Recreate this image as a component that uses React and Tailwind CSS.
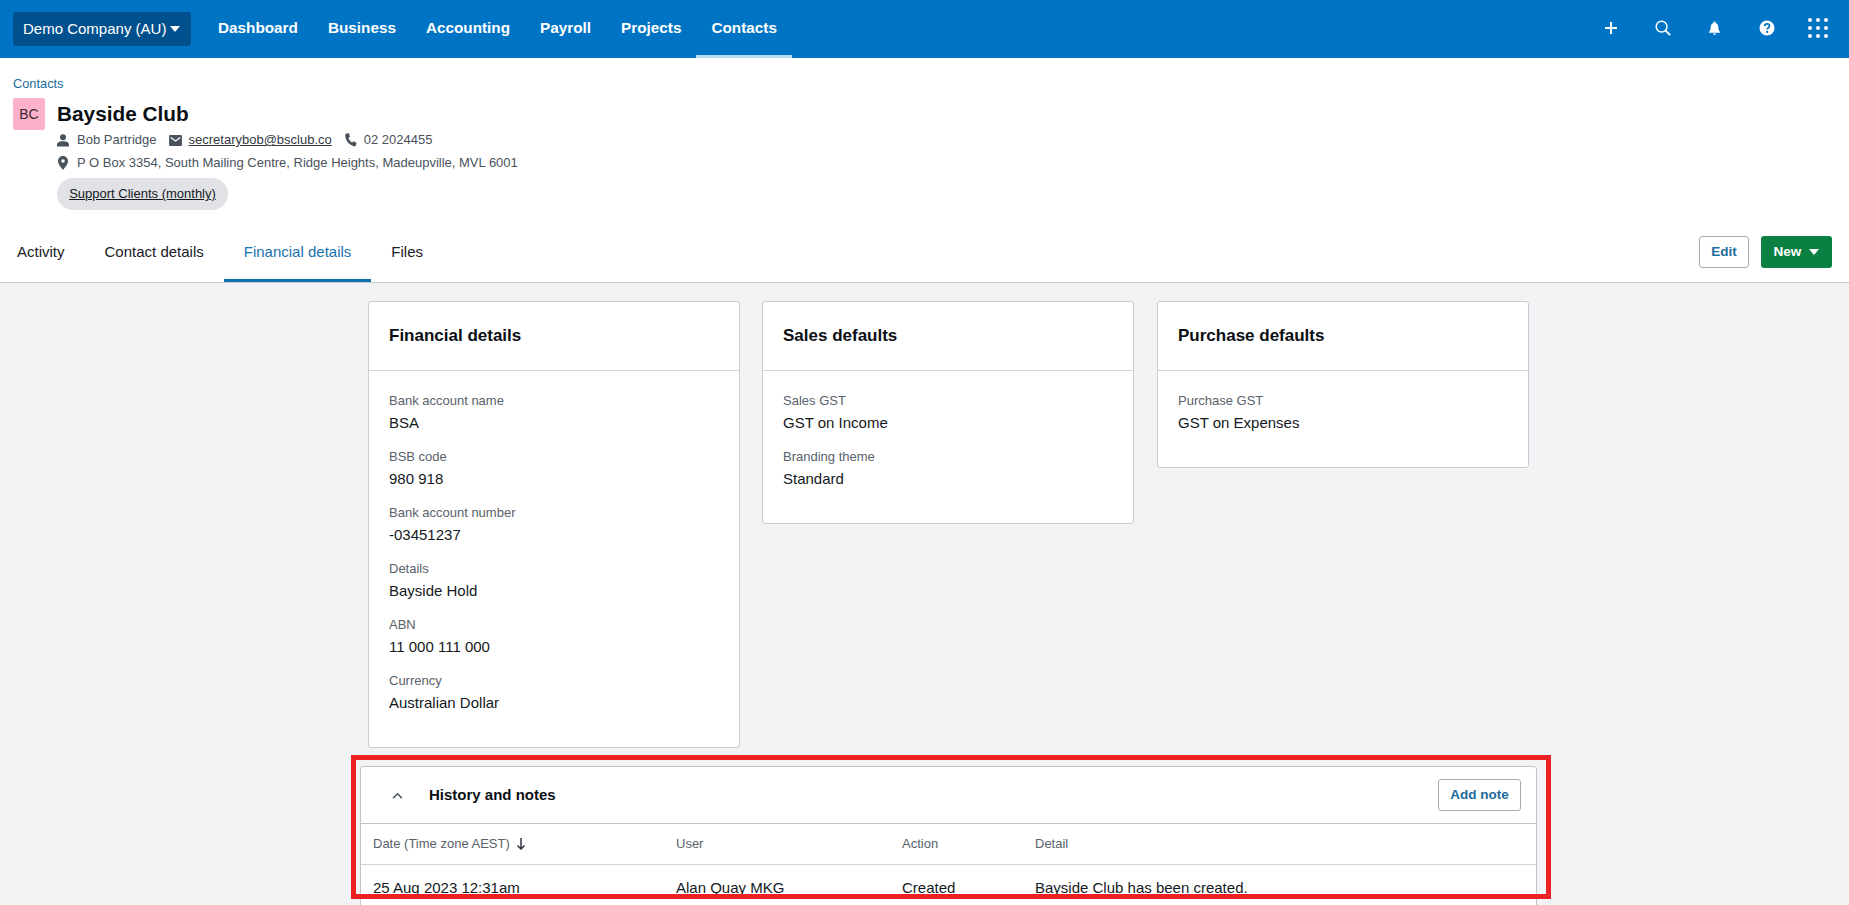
import React from "react";

function Field({ label, value }) {
  return (
    <div className="mb-[14px]">
      <div className="text-[13px] leading-[19px] text-[#59616b]">{label}</div>
      <div className="mt-[3px] text-[15px] leading-[20px] text-[#14191e]">{value}</div>
    </div>
  );
}

function Card({ title, fields, className }) {
  return (
    <div className={"w-[372px] rounded-[3px] border border-[#c9ccd0] bg-white " + className}>
      <div className="flex h-[69px] items-center border-b border-[#d0d3d7] pl-5 text-[17px] font-bold text-[#0b0f14]">{title}</div>
      <div className="px-5 pt-[20px] pb-[10px]">
        {fields.map((f) => (
          <Field key={f[0]} label={f[0]} value={f[1]} />
        ))}
      </div>
    </div>
  );
}

function Caret({ className }) {
  return (
    <svg viewBox="0 0 10 6" className={className} fill="currentColor">
      <path d="M0 0h10L5 6z" />
    </svg>
  );
}

function NavItem({ children, active }) {
  return (
    <div className="relative flex h-full items-center px-[15px] pb-[1px] text-[15.3px] font-bold text-white">
      {children}
      {active && <div className="absolute right-0 bottom-0 left-0 h-[3px] bg-[#b5dcf3]" />}
    </div>
  );
}

export default function App() {
  return (
    <div className="relative h-[905px] overflow-hidden bg-[#f2f3f5] font-['Liberation_Sans',Arial,sans-serif]">
      {/* Top nav */}
      <header className="flex h-[58px] items-center bg-[#0074c4] pl-[13px] pr-[21px]">
        <div className="flex h-[34px] w-[178px] items-center rounded-[3px] bg-[#00508d] pl-[10px] text-[15px] text-white">
          Demo Company (AU)
          <Caret className="ml-[4px] h-[6px] w-[10px]" />
        </div>
        <nav className="ml-[12px] flex h-full">
          <NavItem>Dashboard</NavItem>
          <NavItem>Business</NavItem>
          <NavItem>Accounting</NavItem>
          <NavItem>Payroll</NavItem>
          <NavItem>Projects</NavItem>
          <NavItem active>Contacts</NavItem>
        </nav>
        <div className="mb-[2px] ml-auto flex items-center text-white">
          <svg viewBox="0 0 12 12" className="h-[12px] w-[12px]" fill="none" stroke="currentColor" strokeWidth="2">
            <path d="M6 0v12M0 6h12" />
          </svg>
          <svg viewBox="0 0 16 16" className="ml-[38px] h-[16px] w-[16px]" fill="none" stroke="currentColor" strokeWidth="1.5">
            <circle cx="6.6" cy="6.6" r="5.4" />
            <path d="M10.6 10.6 15.2 15.2" strokeWidth="1.8" />
          </svg>
          <svg viewBox="0 0 14 16" className="ml-[37px] h-[15px] w-[13px]" fill="currentColor">
            <path d="M7 0.5c.7 0 1.1.5 1.1 1.1v.5c2 .5 3 2.2 3 4.4 0 2.600.6 4 1.900 5.300v.8H1v-.8c1.300-1.300 1.900-2.700 1.900-5.300 0-2.200 1-3.900 3-4.400v-.5C5.900 1 6.300.5 7 .5z" />
            <path d="M5.400 13.500h3.200a1.600 1.600 0 0 1-3.200 0z" />
          </svg>
          <svg viewBox="0 0 16 16" className="ml-[38px] h-[16px] w-[16px]">
            <circle cx="8" cy="8" r="7.500" fill="currentColor" />
            <path d="M5.600 6.100c.1-1.500 1.100-2.200 2.500-2.200s2.400.8 2.400 2c0 1.900-2.300 1.800-2.300 3.600" fill="none" stroke="#0074c4" strokeWidth="1.700" />
            <circle cx="8.100" cy="11.900" r="1.100" fill="#0074c4" />
          </svg>
          <div className="ml-[33px] grid grid-cols-3 gap-[4px]">
            {[0, 1, 2, 3, 4, 5, 6, 7, 8].map((i) => (
              <div key={i} className="h-[4px] w-[4px] rounded-full bg-white" />
            ))}
          </div>
        </div>
      </header>

      {/* Contact header */}
      <section className="h-[225px] border-b border-[#c8cbcf] bg-white">
        <div className="h-[167px] pl-[13px] pt-[19px]">
          <div className="text-[12.8px] leading-[14px] text-[#1c6b9c]">Contacts</div>
          <div className="mt-[7px] flex">
            <div className="flex h-[32px] w-[32px] items-center justify-center rounded-[2px] bg-[#fdb1cb] text-[14px] text-[#3c2630]">BC</div>
            <div className="ml-[12px]">
              <div className="text-[20.8px] font-bold leading-[32px] text-[#0b0f14]">Bayside Club</div>
              <div className="mt-[-1px] flex h-[22px] items-center text-[13px] text-[#49525c]">
                <svg viewBox="0 0 12 13" className="h-[13px] w-[12px]" fill="#49525c">
                  <circle cx="6" cy="3.200" r="3" />
                  <path d="M0 12.500V10.700C0 8.400 2.700 7.300 6 7.300s6 1.100 6 3.400v1.800z" />
                </svg>
                <span className="ml-[8px]">Bob Partridge</span>
                <svg viewBox="0 0 14 12" className="ml-[12px] h-[11px] w-[13px]">
                  <rect width="14" height="12" rx="1.200" fill="#49525c" />
                  <path d="M1.800 2.800 7 6.500l5.200-3.700" fill="none" stroke="#fff" strokeWidth="1.400" />
                </svg>
                <span className="ml-[7px] text-[#32393f] underline">secretarybob@bsclub.co</span>
                <svg viewBox="0 0 14 14" className="ml-[12px] h-[14px] w-[14px]" fill="#49525c">
                  <path d="M2.500 0.600 5 .2l1 3.500L4.400 5c.6 1.800 1.900 3.500 3.800 4.600l1.400-1.300 3 1.800-.9 2.600c-.3.600-.9.900-1.600.700C4.500 11.700 1 7 1.300 1.800c.1-.6.500-1.100 1.200-1.200z" />
                </svg>
                <span className="ml-[6px]">02 2024455</span>
              </div>
              <div className="mt-[1px] flex h-[22px] items-center text-[13px] text-[#49525c]">
                <svg viewBox="0 0 10 14" className="ml-[1px] h-[14px] w-[10px]">
                  <path d="M5 0C2.200 0 0 2.200 0 5c0 3.500 5 9 5 9s5-5.500 5-9C10 2.200 7.800 0 5 0z" fill="#49525c" />
                  <circle cx="5" cy="5" r="1.800" fill="#fff" />
                </svg>
                <span className="ml-[9px]">P O Box 3354, South Mailing Centre, Ridge Heights, Madeupville, MVL 6001</span>
              </div>
              <div className="mt-[4px] flex h-[32px] w-[171px] items-center justify-center rounded-full bg-[#e1e2e5] text-[13px] text-[#14191e] underline">
                Support Clients (monthly)
              </div>
            </div>
          </div>
        </div>
        <div className="flex h-[57px] items-stretch justify-between pr-[17px]">
          <div className="flex items-stretch text-[15px]">
            <div className="flex items-center pb-[3px] pl-[17px] pr-[20px] text-[#1a2026]">Activity</div>
            <div className="flex items-center px-[20px] pb-[3px] text-[#1a2026]">Contact details</div>
            <div className="relative flex items-center px-[20px] pb-[3px] text-[#1c72ad]">
              Financial details
              <div className="absolute right-0 bottom-0 left-0 h-[3px] bg-[#0d6fb0]" />
            </div>
            <div className="flex items-center px-[20px] pb-[3px] text-[#1a2026]">Files</div>
          </div>
          <div className="flex items-center pb-[3px] text-[13.5px] font-bold">
            <div className="flex h-[32px] w-[50px] items-center justify-center rounded-[3px] border border-[#a6abb1] bg-white text-[#1c6b9c]">Edit</div>
            <div className="ml-[12px] flex h-[32px] w-[71px] items-center justify-center rounded-[3px] bg-[#0a8042] text-white">
              New
              <Caret className="ml-[8px] h-[6px] w-[10px]" />
            </div>
          </div>
        </div>
      </section>

      {/* Cards */}
      <main className="flex flex-col items-center pl-[48px] pt-[18px]">
        <div className="flex w-[1161px] items-start gap-[22px]">
          <Card
            title="Financial details"
            className="h-[447px]"
            fields={[
              ["Bank account name", "BSA"],
              ["BSB code", "980 918"],
              ["Bank account number", "-03451237"],
              ["Details", "Bayside Hold"],
              ["ABN", "11 000 111 000"],
              ["Currency", "Australian Dollar"],
            ]}
          />
          <Card
            title="Sales defaults"
            className="h-[223px]"
            fields={[
              ["Sales GST", "GST on Income"],
              ["Branding theme", "Standard"],
            ]}
          />
          <Card title="Purchase defaults" className="ml-[1px] h-[167px]" fields={[["Purchase GST", "GST on Expenses"]]} />
        </div>

        <div className="mt-[18px] w-[1177px] rounded-[3px] border border-[#c0c3c7] bg-white pb-[40px]">
          <div className="flex h-[57px] items-center justify-between border-b border-[#c0c3c7] pl-[31px] pr-[15px]">
            <div className="flex items-center">
              <svg viewBox="0 0 12 8" className="h-[7px] w-[11px]" fill="none" stroke="#4f5861" strokeWidth="1.800">
                <path d="M1 7 6 2l5 5" />
              </svg>
              <span className="ml-[26px] text-[15px] font-bold text-[#0b0f14]">History and notes</span>
            </div>
            <div className="flex h-[32px] w-[83px] items-center justify-center rounded-[3px] border border-[#a6abb1] text-[13.5px] font-bold text-[#1c6b9c]">Add note</div>
          </div>
          <div className="grid h-[41px] grid-cols-[303px_226px_133px_1fr] items-center border-b border-[#d0d3d7] pl-[12px] text-[13px] text-[#59616b]">
            <div className="flex items-center">
              Date (Time zone AEST)
              <svg viewBox="0 0 10 12" className="ml-[6px] h-[12px] w-[10px]" fill="none" stroke="#2e353c" strokeWidth="1.500">
                <path d="M5 0v11M1.500 7.500 5 11l3.500-3.500" />
              </svg>
            </div>
            <div>User</div>
            <div>Action</div>
            <div>Detail</div>
          </div>
          <div className="grid h-[46px] grid-cols-[303px_226px_133px_1fr] items-center pl-[12px] text-[15px] text-[#14191e]">
            <div>25 Aug 2023 12:31am</div>
            <div>Alan Quay MKG</div>
            <div>Created</div>
            <div>Bayside Club has been created.</div>
          </div>
        </div>
      </main>

      {/* Red annotation frame drawn over the screenshot */}
      <div className="pointer-events-none absolute top-[755px] left-[351px] h-[144px] w-[1200px] border-[5px] border-[#ed2024]" />
    </div>
  );
}
